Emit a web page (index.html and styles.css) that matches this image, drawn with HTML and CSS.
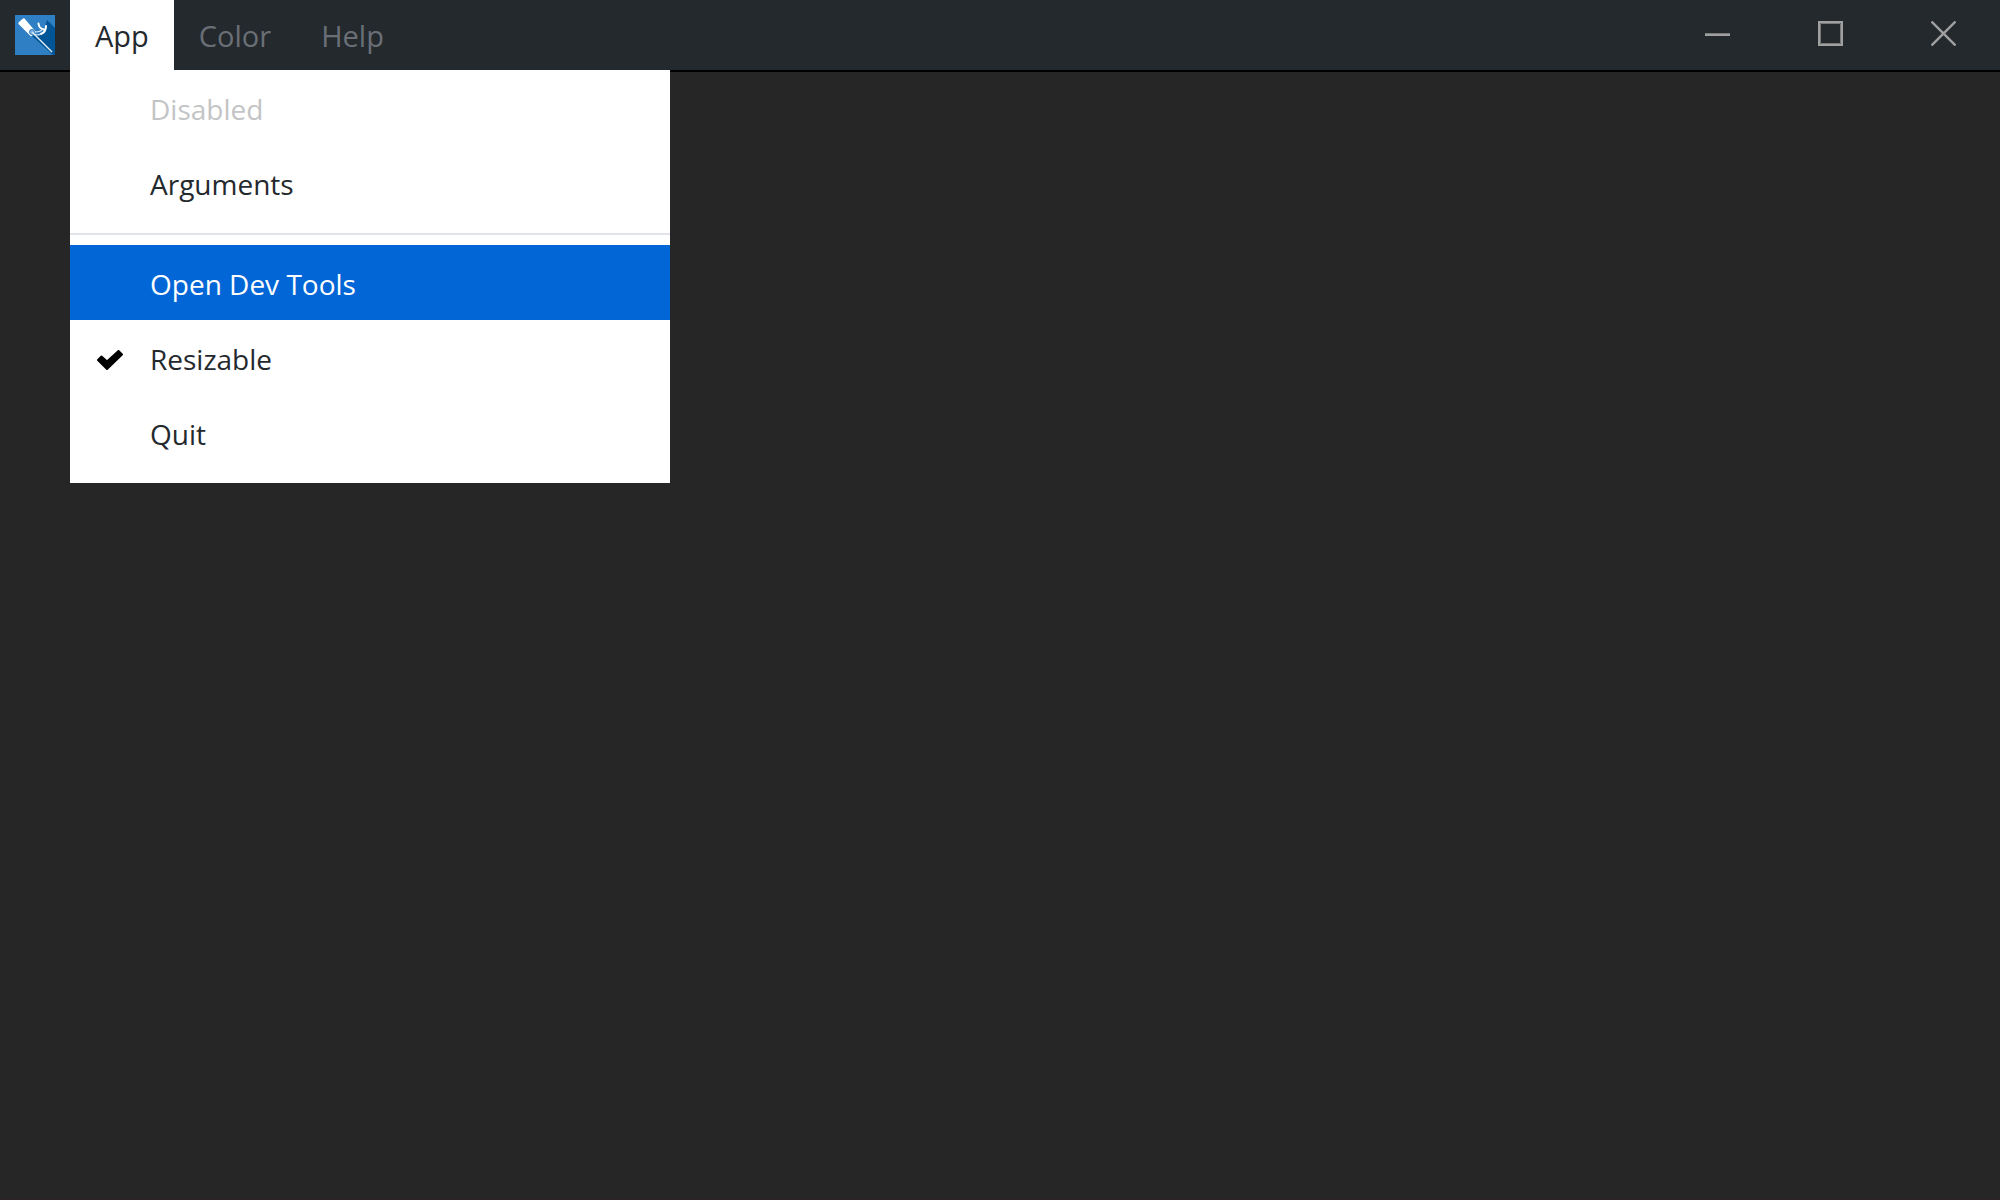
FILE: index.html
```html
<!DOCTYPE html>
<html lang="en">
<head>
<meta charset="utf-8">
<meta name="viewport" content="width=device-width, initial-scale=1">
<title>App</title>
<link rel="stylesheet" href="styles.css">
</head>
<body>
<header class="titlebar">
  <svg class="app-icon" viewBox="0 0 40 40" aria-hidden="true">
    <path fill="#2f7fc4" d="M0 0h40v40H0z"/>
    <path fill="#005596" d="M32 5L40 13V40H38L17 21L28 18Z"/>
    <path fill="#fff" d="M9.500 3.500L21 17L16 21.500L3.500 9Q3 8 4 7L8 3.500Q9 3 9.500 3.500Z"/>
    <path fill="none" stroke="#fff" stroke-width="2" stroke-linecap="round" d="M23.500 8.500Q24 14 29 14.500M31 11Q31 17 26 19"/>
    <path fill="none" stroke="#d5e4f1" stroke-width="1.200" stroke-linecap="round" d="M27.500 14Q26 17 20 17M26 19Q24 20.500 20 19.500"/>
    <circle cx="17" cy="17" r="2.500" fill="#7eb0dc" stroke="#2f7fc4"/>
    <path fill="none" stroke="#e4eef7" stroke-width="1.500" d="M17 17L37 37"/>
  </svg>
  <nav class="menubar">
    <div class="menu">
      <button class="menu-button open" type="button" aria-haspopup="menu" aria-expanded="true">App</button>
      <div class="dropdown" role="menu">
        <button class="item" type="button" role="menuitem" disabled><span class="label">Disabled</span></button>
        <button class="item" type="button" role="menuitem"><span class="label">Arguments</span></button>
        <hr class="separator">
        <button class="item selected" type="button" role="menuitem"><span class="label">Open Dev Tools</span></button>
        <button class="item" type="button" role="menuitemcheckbox" aria-checked="true">
          <svg class="check" viewBox="0 0 26 20" aria-hidden="true"><path d="M1 10L4.500 6.500L10 11.500L21.500 1L25 4.500L10 19Z" fill="#000" stroke="#000" stroke-width="2" stroke-linejoin="round"/></svg>
          <span class="label">Resizable</span>
        </button>
        <button class="item" type="button" role="menuitem"><span class="label">Quit</span></button>
      </div>
    </div>
    <button class="menu-button" type="button" aria-haspopup="menu">Color</button>
    <button class="menu-button" type="button" aria-haspopup="menu">Help</button>
  </nav>
  <div class="controls">
    <button class="control" type="button" aria-label="Minimize"><svg viewBox="0 0 25 25"><path fill="#a0a0a0" d="M0 13h25v2H0z"/><path fill="#777a7b" d="M0 12h25v1H0z"/></svg></button>
    <button class="control" type="button" aria-label="Maximize"><svg viewBox="0 0 25 25"><path fill="none" stroke="#777a7b" d="M2.500 2.500h20v20h-20z"/><path fill="none" stroke="#a0a0a0" stroke-width="2" d="M1 1h23v23H1z"/></svg></button>
    <button class="control" type="button" aria-label="Close"><svg viewBox="0 0 25 25"><path fill="none" stroke="#a0a0a0" stroke-width="2.400" d="M.5 .5l24 24M24.500 .5l-24 24"/></svg></button>
  </div>
</header>
<main class="content"></main>
</body>
</html>
```
FILE: styles.css
```css
* {
  box-sizing: border-box;
}

body {
  display: flex;
  flex-direction: column;
  min-height: 100vh;
  margin: 0;
  background: #262626;
  color: #24292e;
  font: 28px/40px "Segoe UI", "Open Sans", "Noto Sans", sans-serif;
}

button {
  margin: 0;
  border: 0;
  background: none;
  color: inherit;
  font: inherit;
}

.titlebar {
  display: flex;
  height: 72px;
  border-bottom: 2px solid #000;
  background: #24292e;
}

.app-icon {
  width: 40px;
  height: 40px;
  margin: 15px;
}

.menubar {
  display: flex;
  font-size: 29px;
}

.menu {
  position: relative;
  display: flex;
}

.menu-button {
  padding: 2px 25px 0;
  color: #6a6f76;
}

.menu-button.open {
  background: #fff;
  color: #24292e;
}

.dropdown {
  position: absolute;
  top: 100%;
  left: 0;
  width: 600px;
  padding-bottom: 13px;
  background: #fff;
  font-size: 28px;
}

.item {
  display: grid;
  grid-template-columns: 80px 1fr;
  align-items: center;
  width: 100%;
  height: 75px;
  padding: 2px 0 0;
  text-align: left;
}

.item:disabled {
  color: #c3c4c5;
}

.item.selected {
  background: #0366d6;
  color: #fff;
}

.label {
  grid-column: 2;
}

.check {
  width: 26px;
  height: 20px;
  margin-top: 2px;
  justify-self: center;
}

.separator {
  height: 2px;
  margin: 13px 0 10px;
  border: 0;
  background: #e1e4e8;
}

.controls {
  display: flex;
  margin-left: auto;
}

.control {
  display: flex;
  justify-content: center;
  width: 113px;
  padding: 21px 0 0;
}

.control svg {
  width: 25px;
  height: 25px;
}

.content {
  flex: 1;
  border-bottom: 1px solid #2b2228;
}
```
